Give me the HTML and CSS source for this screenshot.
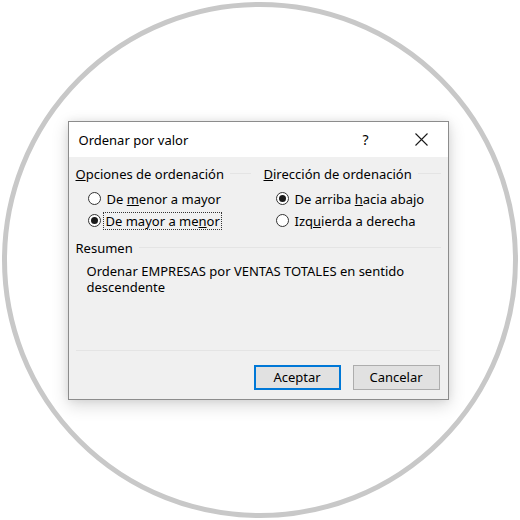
FILE: index.html
```html
<!DOCTYPE html>
<html lang="es">
<head>
<meta charset="utf-8">
<title>Ordenar por valor</title>
<link rel="stylesheet" href="styles.css">
</head>
<body>
<div class="ring">
  <div class="dialog">
    <div class="titlebar">
      <span class="title">Ordenar por valor</span>
      <span class="help">?</span>
      <span class="close"><svg width="13" height="13" viewBox="0 0 13 13"><path d="M0.5 0.5L12.5 12.5M12.5 0.5L0.5 12.5" stroke="#1a1a1a" stroke-width="1.1" fill="none"/></svg></span>
    </div>
    <div class="content">
      <div class="groups">
        <div class="group">
          <div class="ghead"><span><u>O</u>pciones de ordenación</span><i class="gline"></i></div>
          <div class="radio"><span class="dot"></span><span class="lbl">De <u>m</u>enor a mayor</span></div>
          <div class="radio checked"><span class="dot"></span><span class="lbl focus">De mayor a me<u>n</u>or</span></div>
        </div>
        <div class="group">
          <div class="ghead"><span><u>D</u>irección de ordenación</span><i class="gline"></i></div>
          <div class="radio checked"><span class="dot"></span><span class="lbl">De arriba <u>h</u>acia abajo</span></div>
          <div class="radio"><span class="dot"></span><span class="lbl">Izq<u>u</u>ierda a derecha</span></div>
        </div>
      </div>
      <div class="ghead summary-head"><span>Resumen</span><i class="gline"></i></div>
      <p class="summary">Ordenar EMPRESAS por VENTAS TOTALES en sentido descendente</p>
      <div class="footer">
        <button class="btn primary">Aceptar</button>
        <button class="btn">Cancelar</button>
      </div>
    </div>
  </div>
</div>
</body>
</html>
```
FILE: styles.css
```css
html, body {
  margin: 0;
  padding: 0;
  background: #fff;
}
body {
  width: 520px;
  height: 520px;
  display: flex;
  align-items: center;
  justify-content: center;
  font-family: "Noto Sans", "Open Sans", sans-serif;
  font-size: 13px;
  color: #000;
}
.ring {
  width: 506px;
  height: 506px;
  border: 5px solid #c8c8c8;
  border-radius: 50%;
  display: flex;
  align-items: center;
  justify-content: center;
}
.dialog {
  width: 381px;
  height: 279px;
  box-sizing: border-box;
  margin-right: 4px;
  border: 1px solid #8c8c8c;
  background: #f0f0f0;
  box-shadow: 0 5px 16px rgba(0,0,0,0.16), 0 0 8px rgba(0,0,0,0.07);
  display: flex;
  flex-direction: column;
}
.titlebar {
  height: 35px;
  background: #fff;
  display: flex;
  align-items: center;
  padding: 0 0 0 10px;
  flex: none;
}
.title {
  flex: 1;
  font-size: 13px;
  padding-top: 1px;
}
.help {
  font-size: 14px;
  width: 10px;
  text-align: center;
  margin-right: 44px;
}
.close {
  display: flex;
  margin-right: 20px;
}
.content {
  flex: 1;
  display: flex;
  flex-direction: column;
  padding: 9px 7px 9px 7px;
}
.groups {
  display: grid;
  grid-template-columns: 188px 1fr;
}
.ghead {
  display: flex;
  align-items: center;
  line-height: 16px;
  height: 16px;
  margin-bottom: 6px;
}
.ghead span {
  white-space: nowrap;
}
.gline {
  flex: 1;
  height: 1px;
  background: #e4e4e4;
  margin: 0 13px 0 6px;
}
.group:last-child .gline {
  margin-right: 0;
}
.radio {
  display: flex;
  align-items: center;
  height: 22px;
  padding-left: 12px;
}
.dot {
  width: 13px;
  height: 13px;
  box-sizing: border-box;
  border: 1px solid #333;
  border-radius: 50%;
  background: #fff;
  margin-right: 6px;
  display: flex;
  align-items: center;
  justify-content: center;
  flex: none;
}
.checked .dot::after {
  content: "";
  width: 7px;
  height: 7px;
  border-radius: 50%;
  background: #1a1a1a;
}
.lbl {
  white-space: nowrap;
  line-height: 16px;
}
.focus {
  outline: 1px dotted #333;
  outline-offset: 0;
  margin-left: -3px;
  padding: 0 1px 0 2px;
}
.summary-head {
  margin-top: 8px;
}
.summary-head .gline {
  margin-right: 0;
}
.summary {
  margin: 1px 20px 0 11px;
  line-height: 16px;
}
.footer {
  margin-top: auto;
  border-top: 1px solid #e4e4e4;
  padding-top: 14px;
  display: flex;
  justify-content: flex-end;
  gap: 12px;
  margin-right: 1px;
}
.btn {
  font-family: inherit;
  font-size: 13px;
  color: #000;
  width: 87px;
  height: 25px;
  box-sizing: border-box;
  background: #e1e1e1;
  border: 1px solid #adadad;
  padding: 0;
}
.btn.primary {
  border: 2px solid #0078d7;
}
```
